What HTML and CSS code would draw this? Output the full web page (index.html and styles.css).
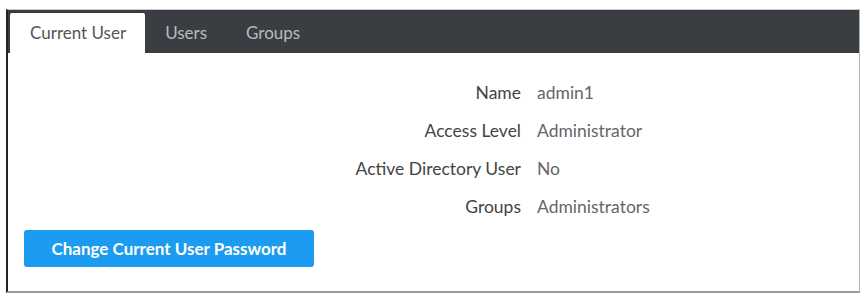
FILE: index.html
```html
<!DOCTYPE html>
<html lang="en">
<head>
    <meta charset="UTF-8">
    <meta name="viewport" content="width=device-width, initial-scale=1.0">
    <title>Current User</title>
    <link rel="stylesheet" href="styles.css">
</head>
<body>
    <div class="panel">
        <div class="tab-bar">
            <div class="tab active">Current User</div>
            <div class="tab">Users</div>
            <div class="tab">Groups</div>
        </div>
        <div class="panel-body">
            <div class="info">
                <div class="label">Name</div>
                <div class="value">admin1</div>
                <div class="label">Access Level</div>
                <div class="value">Administrator</div>
                <div class="label">Active Directory User</div>
                <div class="value">No</div>
                <div class="label">Groups</div>
                <div class="value">Administrators</div>
            </div>
            <button class="change-password">Change Current User Password</button>
        </div>
    </div>
</body>
</html>
```

FILE: styles.css
```css
body {
    font-family: Lato, "Open Sans", sans-serif;
    margin: 0;
    padding: 0;
    background-color: #ffffff;
}

.panel {
    margin: 9px 0 0 6px;
    width: 851px;
    height: 281px;
    border-top: 1px solid #c8c8c8;
    border-left: 2px solid #222;
    border-right: 1px solid #b0b0b0;
    border-bottom: 2px solid #9a9a9a;
    display: flex;
    flex-direction: column;
}

.tab-bar {
    background-color: #3a3d41;
    height: 43px;
    display: flex;
    align-items: flex-end;
    padding-left: 2px;
}

.tab {
    height: 40px;
    line-height: 40px;
    padding: 0 19px 0 20px;
    font-size: 17px;
    color: #b9bbbe;
}

.tab.active {
    background-color: #ffffff;
    color: #555;
    border-radius: 2px 2px 0 0;
}

.panel-body {
    flex: 1;
    padding: 20px 0 0 16px;
}

.info {
    display: grid;
    grid-template-columns: 497px auto;
    column-gap: 16px;
    grid-auto-rows: 38px;
    align-items: center;
    font-size: 17.5px;
}

.label {
    text-align: right;
    color: #444;
}

.value {
    color: #666;
}

.change-password {
    margin-top: 5px;
    width: 290px;
    height: 37px;
    background-color: #1b9cf0;
    color: white;
    border: none;
    border-radius: 3px;
    font-family: Lato, "Open Sans", sans-serif;
    font-weight: bold;
    font-size: 17px;
    cursor: pointer;
}
```
